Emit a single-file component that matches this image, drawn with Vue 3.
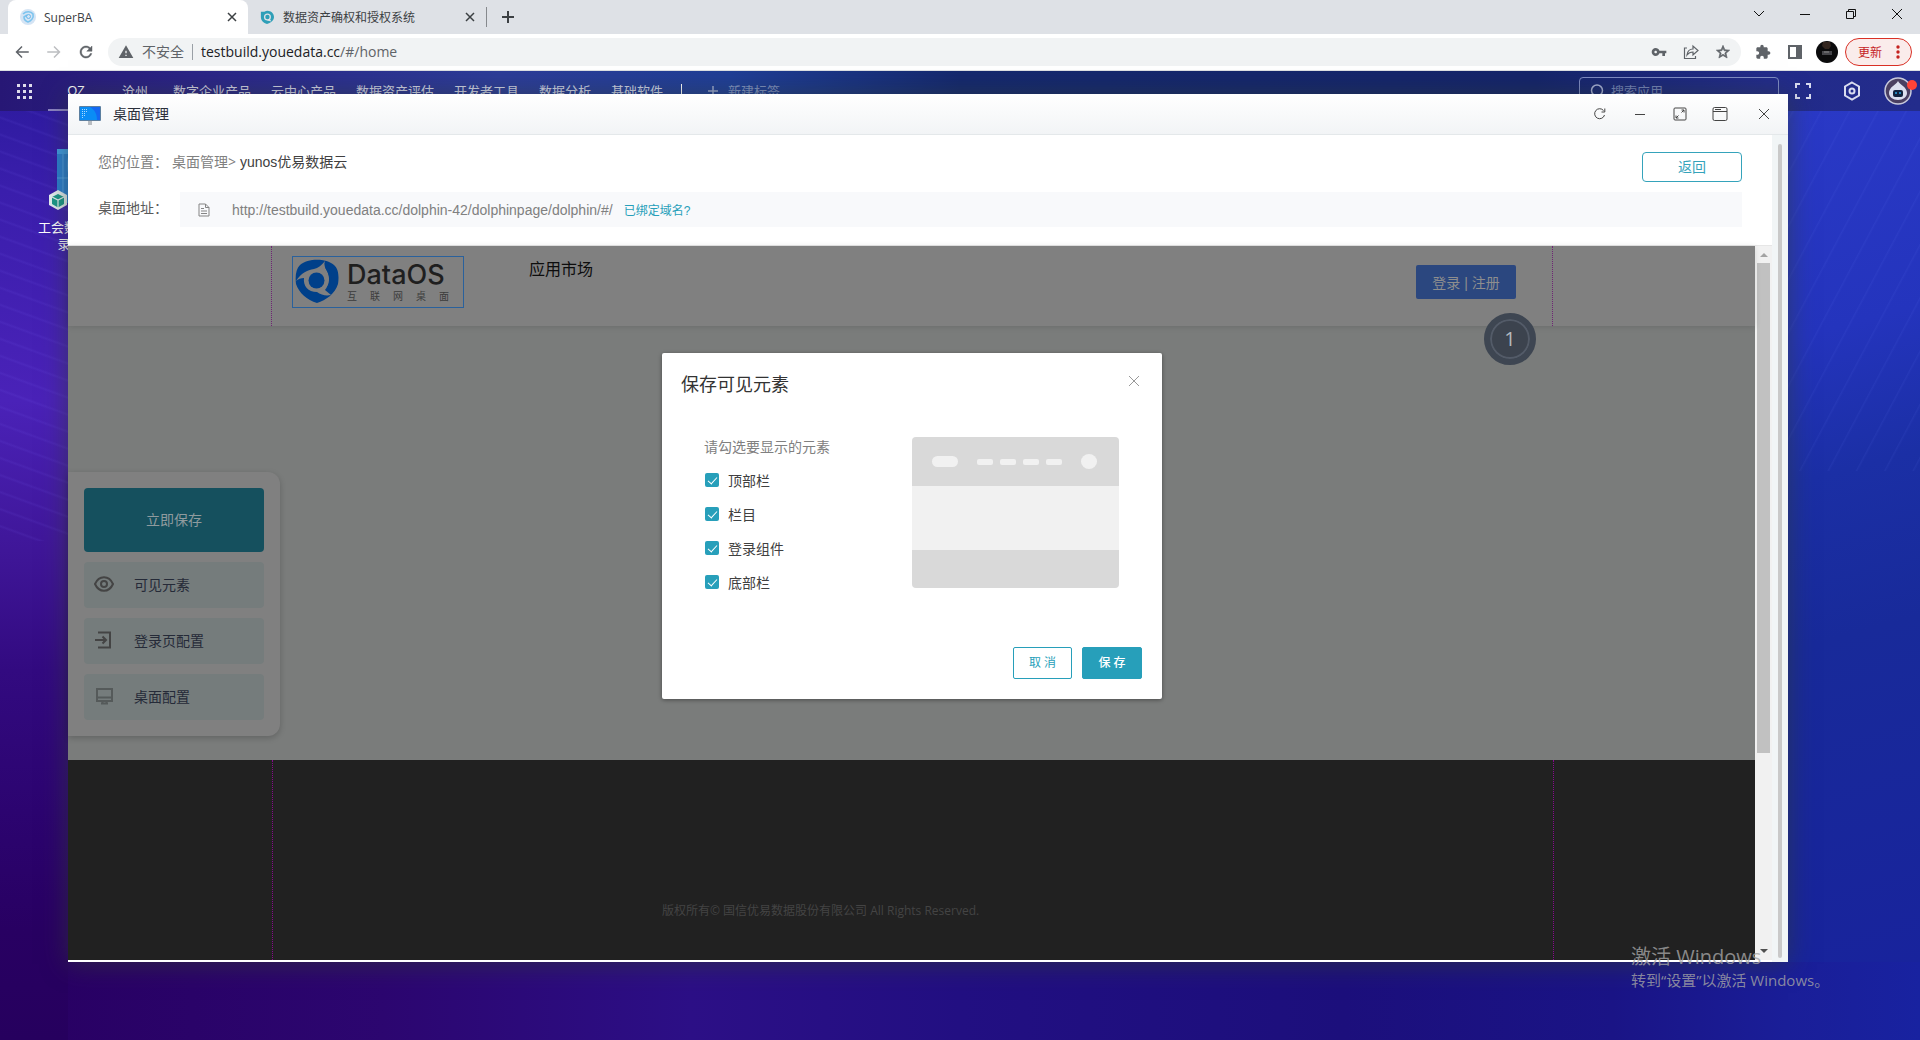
<script setup>
import { ref } from 'vue'

const desktopTabs = ['沧州', '数字企业产品', '云中心产品', '数据资产评估', '开发者工具', '数据分析', '基础软件']
const address = ref('testbuild.youedata.cc/#/home')
const elements = ref([
  { id: 'top', label: '顶部栏', on: true },
  { id: 'column', label: '栏目', on: true },
  { id: 'login', label: '登录组件', on: true },
  { id: 'bottom', label: '底部栏', on: true },
])
</script>

<template>
  <div class="screen">
    <header class="browser">
      <div class="tabstrip">
        <div class="tab active">
          <svg class="fav" viewBox="0 0 16 16"><circle cx="8" cy="8" r="8" fill="#d5e4f4" /><path d="M3 5c3-3 8-3 10 0 1 4-2 7-5 8-3-1-4-3-4-5l3-2" fill="none" stroke="#7cc4ee" stroke-width="1.6" /><circle cx="8.500" cy="7.500" r="2" fill="none" stroke="#6ab8ea" /></svg>
          <span class="tab-title">SuperBA</span>
          <button class="tab-close" aria-label="关闭"><svg viewBox="0 0 10 10"><path d="M1 1l8 8M9 1l-8 8" /></svg></button>
        </div>
        <div class="tab">
          <svg class="fav small" viewBox="0 0 16 16"><path d="M1 2l4 0c5-3 11 1 11 6 0 4-4 7-8 8-4-1-7-4-7-8z" fill="#2f9fb8" /><circle cx="8.500" cy="8" r="4" fill="#dee1e6" /><circle cx="8.500" cy="8" r="2.500" fill="#2f9fb8" /><path d="M8 12l5 1-2-3z" fill="#dee1e6" /></svg>
          <span class="tab-title">数据资产确权和授权系统</span>
          <button class="tab-close" aria-label="关闭"><svg viewBox="0 0 10 10"><path d="M1 1l8 8M9 1l-8 8" /></svg></button>
        </div>
        <button class="new-tab" aria-label="新标签页"><svg viewBox="0 0 12 12"><path d="M6 0v12M0 6h12" /></svg></button>
        <div class="win-ctl">
          <svg viewBox="0 0 12 12"><path d="M1 3l5 5 5-5" /></svg>
          <svg viewBox="0 0 12 12"><path d="M1 6.500h10" /></svg>
          <svg viewBox="0 0 12 12"><path d="M1.500 3.500h7v7h-7zM3.500 3V1.500h7v7H9" /></svg>
          <svg viewBox="0 0 12 12"><path d="M1 1l10 10M11 1L1 11" /></svg>
        </div>
      </div>
      <div class="toolbar">
        <div class="nav-ctl">
          <svg viewBox="0 0 24 24" fill="#5f6368"><path d="M21 11H7.100l5.590-5.590L11.300 4l-8 8 8 8 1.410-1.410L7.100 13H21v-2z" /></svg>
          <svg viewBox="0 0 24 24" fill="#bcbec1"><path d="M3 11h13.900l-5.590-5.590L12.700 4l8 8-8 8-1.410-1.410L16.900 13H3v-2z" /></svg>
          <svg viewBox="0 0 24 24" fill="#5f6368"><path d="M17.650 6.350C16.200 4.900 14.210 4 12 4c-4.420 0-7.990 3.580-7.990 8s3.570 8 7.990 8c3.730 0 6.840-2.550 7.730-6h-2.080c-.82 2.330-3.040 4-5.650 4-3.310 0-6-2.690-6-6s2.690-6 6-6c1.660 0 3.140.69 4.220 1.780L13 11h7V4l-2.350 2.350z" stroke="#5f6368" stroke-width=".6" /></svg>
        </div>
        <div class="omnibox">
          <svg viewBox="0 0 24 24" fill="#5f6368"><path d="M1 21h22L12 2 1 21zm12-3h-2v-2h2v2zm0-4h-2v-4h2v4z" /></svg>
          <span class="unsafe">不安全</span>
          <span class="url" :title="address"><b>testbuild.youedata.cc</b>/#/home</span>
          <svg viewBox="0 0 24 24" fill="#5f6368"><path d="M12.650 10C11.830 7.670 9.610 6 7 6c-3.310 0-6 2.690-6 6s2.690 6 6 6c2.610 0 4.830-1.670 5.650-4H17v4h4v-4h2v-4H12.650zM7 14c-1.100 0-2-.9-2-2s.9-2 2-2 2 .9 2 2-.9 2-2 2z" /></svg>
          <svg viewBox="0 0 16 16" fill="none" stroke="#5f6368" stroke-width="1.200"><path d="M4 4H1.500v10.500h11V12M4 11c.5-4 3-6 6-6V2l5 4.500-5 4.500V8C7.500 8 5.500 9 4 11z" /></svg>
          <svg viewBox="0 0 24 24" fill="#5f6368"><path d="M22 9.240l-7.190-.62L12 2 9.190 8.630 2 9.240l5.460 4.730L5.820 21 12 17.270 18.180 21l-1.630-7.030L22 9.240zM12 15.400l-3.760 2.270 1-4.280-3.320-2.880 4.380-.38L12 6.100l1.710 4.040 4.380.38-3.320 2.880 1 4.280L12 15.400z" stroke="#5f6368" /></svg>
        </div>
        <div class="ext">
          <svg viewBox="0 0 24 24" fill="#5f6368"><path d="M20.500 11H19V7c0-1.100-.9-2-2-2h-4V3.500C13 2.120 11.880 1 10.500 1S8 2.120 8 3.500V5H4c-1.100 0-1.990.9-1.990 2v3.800H3.500c1.490 0 2.700 1.210 2.700 2.700s-1.210 2.700-2.700 2.700H2V20c0 1.100.9 2 2 2h3.800v-1.500c0-1.490 1.210-2.700 2.700-2.700 1.490 0 2.700 1.210 2.700 2.700V22H17c1.100 0 2-.9 2-2v-4h1.500c1.380 0 2.500-1.120 2.500-2.500S21.880 11 20.500 11z" /></svg>
          <svg viewBox="0 0 16 16" fill="#5f6368"><path d="M1 1h14v14H1zM3 3v10h6V3z" fill-rule="evenodd" /></svg>
          <svg class="user" viewBox="0 0 22 22"><circle cx="11" cy="11" r="11" fill="#0b0b0c" /><path d="M7 1h7l1 4-2 3H9L6 5z" fill="#33261f" /><path d="M6 10h10v4H6z" fill="#46464a" /><path d="M8 11h5" stroke="#8a8a8a" /></svg>
        </div>
        <button class="update">更新<svg viewBox="0 0 4 16"><circle cx="2" cy="3" r="1.700" /><circle cx="2" cy="8" r="1.700" /><circle cx="2" cy="13" r="1.700" /></svg></button>
      </div>
    </header>

    <main class="desktop">
      <nav class="dock">
        <svg class="apps" viewBox="0 0 15 15"><path d="M0 0h3v3H0zM6 0h3v3H6zM12 0h3v3h-3zM0 6h3v3H0zM6 6h3v3H6zM12 6h3v3h-3zM0 12h3v3H0zM6 12h3v3H6zM12 12h3v3h-3z" fill="#fff" fill-opacity=".85" /></svg>
        <a class="home" href="#/home">OZ</a>
        <a v-for="t in desktopTabs" :key="t" class="dock-link" href="#/home">{{ t }}</a>
        <span class="bar"></span>
        <button class="add-tab"><svg viewBox="0 0 10 10"><path d="M5 0v10M0 5h10" /></svg>新建标签</button>
        <label class="search">
          <svg viewBox="0 0 14 14"><circle cx="7" cy="6.500" r="5.500" /><path d="M10 11l2 2" /></svg>
          <input type="text" placeholder="搜索应用" aria-label="搜索应用" />
        </label>
        <svg class="full" viewBox="0 0 16 16"><path d="M1 5V1h4M11 1h4v4M15 11v4h-4M5 15H1v-4" /></svg>
        <svg class="hex" viewBox="0 0 18 20"><path d="M9 1.500l7 4v9l-7 4-7-4v-9z" /><circle cx="9" cy="10" r="2.500" /></svg>
        <div class="me">
          <svg viewBox="0 0 28 28"><circle cx="14" cy="14" r="13" fill="#4a3f62" stroke="#c7c9dc" stroke-width="1.500" /><path d="M14 4c2 4 9 6 9 12 0 4-4 7-9 7s-9-3-9-7c0-6 7-8 9-12z" fill="#dcdff0" /><rect x="9" y="13" width="10" height="7" rx="2" fill="#12233f" /><path d="M12 15v2M16 15v2" stroke="#2ba4e0" stroke-width="1.500" /></svg>
          <i></i>
        </div>
      </nav>

      <div class="shortcut">
        <svg viewBox="0 0 44 62"><rect x="8" y="1" width="36" height="54" fill="#2a7fd2" /><path d="M8 1h36v5H8z" fill="#3f9be4" /><path d="M14 6v49M8 30h36M20 6c-4 20 2 30 14 46" stroke="#69b4ee" stroke-opacity=".6" fill="none" /><path d="M9 42l9 5v10l-9 5-9-5V47z" fill="#e6f0f2" /><path d="M9 46l6 3v7l-6 3.500-6-3.500v-7z" fill="#1b9a8a" /><path d="M3 49l6 3 6-3M9 52v8" stroke="#e6f0f2" stroke-width="1.200" fill="none" /></svg>
        <span>工会数据录</span>
      </div>

      <section class="window">
        <header class="titlebar">
          <svg class="app-icon" viewBox="0 0 22 19"><path d="M9 15h4v4H9z" fill="#b9bdc2" /><rect width="22" height="15" rx="1" fill="#5c7fa0" /><rect x="1" y="1" width="20" height="13" fill="#0a8cf5" /><path d="M11 1h10v13h-3c0-6-2-10-7-13z" fill="#1467f2" /><path d="M3 3h1v1H3zM5 3h1v1H5zM7 3h1v1H7zM3 5h1v1H3zM5 5h1v1H5zM7 5h1v1H7zM3 7h1v1H3zM5 7h1v1H5zM3 9h1v1H3zM5 9h1v1H5zM3 11h1v1H3z" fill="#a9dcff" /></svg>
          <h1>桌面管理</h1>
          <div class="title-ctl">
            <svg viewBox="0 0 16 16"><path d="M12.500 9A5 5 0 1 1 11.500 4.500M12.800 2.500v3.500H9.500" /></svg>
            <svg viewBox="0 0 16 16"><path d="M3 8.500h10" /></svg>
            <svg viewBox="0 0 16 16"><rect x="2" y="2" width="12" height="12" rx="1" /><path d="M9.500 6.500L12 4M9.500 4H12v2.500M6.500 9.500L4 12M4 9.500V12h2.500" /></svg>
            <svg viewBox="0 0 16 16"><rect x="1" y="1.500" width="14" height="13" rx="1.500" /><path d="M1 5.500h14M3 3.500h6" /></svg>
            <svg viewBox="0 0 16 16"><path d="M3 3l10 10M13 3L3 13" /></svg>
          </div>
        </header>
        <div class="body">
          <div class="content">
            <div class="info">
              <div class="row">
                <p class="crumb"><span>您的位置：</span><a href="#/desktop">桌面管理&gt;</a><strong>yunos优易数据云</strong></p>
                <button class="back">返回</button>
              </div>
              <div class="row addr">
                <span class="addr-label">桌面地址：</span>
                <div class="addr-box">
                  <svg viewBox="0 0 12 14"><path d="M1 1h6.500L11 4.500V13H1zM7.500 1v3.500H11M3 5.500h3M3 8h6M3 10.500h6" /></svg>
                  <span>http://testbuild.youedata.cc/dolphin-42/dolphinpage/dolphin/#/</span>
                  <a href="#/domain">已绑定域名?</a>
                </div>
              </div>
            </div>

            <div class="frame">
              <div class="site">
                <div class="site-head">
                  <div class="guide">
                    <div class="logo">
                      <svg viewBox="0 0 44 44"><path d="M5 6C13-1 31-1 39 6c5 4 5 13 4 19-3 10-12 16-21 19C12 41 4 34 1 25 0 17 1 10 5 6z" fill="#00408a" /><path d="M1 22c5-8 11-11 18-12 4-1 8-4 11-8-1 4 0 7 2 10 4 7 3 14-2 19l6 5c-5 1-10 0-14-3-9 0-14-6-13-14-3 0-6 1-8 3z" fill="#808080" /><path d="M30 2c-1 4 0 7 2 10 3 6 3 13-2 19 8-6 9-19 0-29z" fill="#00408a" /><circle cx="21.500" cy="21.500" r="8" fill="#00408a" /></svg>
                      <div class="logo-words">
                        <b>DataOS</b>
                        <small><span>互</span><span>联</span><span>网</span><span>桌</span><span>面</span></small>
                      </div>
                    </div>
                    <a class="market" href="#/market">应用市场</a>
                    <button class="login">登录 | 注册</button>
                    <span class="badge">1</span>
                  </div>
                </div>
                <div class="site-main">
                  <aside class="panel">
                    <button class="save-now">立即保存</button>
                    <button class="item"><svg viewBox="0 0 20 20"><path d="M1 10c4-9 14-9 18 0-4 9-14 9-18 0z" /><circle cx="10" cy="10" r="3" /></svg>可见元素</button>
                    <button class="item"><svg viewBox="0 0 20 20"><path d="M4 2.500h12v15H4M1 10h11M8.500 6.500L12 10l-3.500 3.500" /></svg>登录页配置</button>
                    <button class="item dim"><svg viewBox="0 0 20 20"><path d="M3 3h15v12H3zM3 11.500h15M8.500 15v2.500M12.500 15v2.500M7 17.500h7" /></svg>桌面配置</button>
                  </aside>
                </div>
                <footer class="site-foot">
                  <div class="guide">
                    <p>版权所有© 国信优易数据股份有限公司 All Rights Reserved.</p>
                  </div>
                </footer>
              </div>
              <div class="scroll">
                <i class="up"></i>
                <span></span>
                <i class="down"></i>
              </div>

              <form class="dialog" role="dialog" @submit.prevent>
                <header>
                  <h2>保存可见元素</h2>
                  <button type="button" class="x" aria-label="关闭"><svg viewBox="0 0 12 12"><path d="M1 1l10 10M11 1L1 11" /></svg></button>
                </header>
                <div class="dialog-body">
                  <fieldset>
                    <legend>请勾选要显示的元素</legend>
                    <label v-for="e in elements" :key="e.id" :for="e.id"><input :id="e.id" v-model="e.on" type="checkbox" />{{ e.label }}</label>
                  </fieldset>
                  <div class="preview">
                    <div class="p-top"><i class="pill"></i><div class="dashes"><i></i><i></i><i></i><i></i></div><i class="dot"></i></div>
                    <div class="p-mid"></div>
                    <div class="p-bot"></div>
                  </div>
                </div>
                <div class="actions">
                  <button type="button">取 消</button>
                  <button type="submit" class="primary">保 存</button>
                </div>
              </form>
            </div>
          </div>
          <div class="gutter"><span></span></div>
        </div>
      </section>

      <div class="activate">
        <p class="big">激活 Windows</p>
        <p>转到“设置”以激活 Windows。</p>
      </div>
    </main>
  </div>
</template>

<style>
body {
  margin: 0;
}
</style>

<style scoped>
* {
  box-sizing: border-box;
}
.screen {
  display: flex;
  flex-direction: column;
  min-height: 100vh;
  overflow: hidden;
  font-family: "Open Sans", "Noto Sans CJK SC", sans-serif;
  font-size: 14px;
  font-weight: 400;
  color: #333;
}
svg {
  display: block;
  flex: none;
}
button {
  padding: 0;
  border: 0;
  background: none;
  font: inherit;
  color: inherit;
}
p,
h1,
h2 {
  margin: 0;
  font-weight: 400;
}
a {
  color: inherit;
  text-decoration: none;
}

/* browser chrome */
.browser {
  border-bottom: 1px solid #dcdfe2;
  background: #fff;
}
.tabstrip {
  display: flex;
  align-items: flex-end;
  height: 34px;
  padding-left: 8px;
  background: #dee1e6;
  font-size: 12px;
  color: #3c4043;
}
.tab {
  display: flex;
  align-items: center;
  width: 238px;
  height: 34px;
  padding: 0 11px 0 12px;
}
.tab.active {
  width: 240px;
  border-radius: 8px 8px 0 0;
  background: #fff;
}
.fav {
  width: 16px;
  height: 16px;
  margin-right: 8px;
}
.fav.small {
  width: 14px;
  height: 14px;
  margin-right: 9px;
}
.tab-title {
  flex: 1;
}
.tab-close svg {
  width: 10px;
  height: 10px;
  stroke: #3c4043;
  stroke-width: 1.5;
}
.new-tab {
  align-self: center;
  height: 20px;
  padding-left: 15px;
  border-left: 1px solid #86898d;
}
.new-tab svg {
  width: 12px;
  height: 12px;
  stroke: #3c4043;
  stroke-width: 2;
}
.win-ctl {
  display: flex;
  gap: 34px;
  margin-left: auto;
  padding: 0 17px 14px 0;
}
.win-ctl svg {
  width: 12px;
  height: 12px;
  fill: none;
  stroke: #111;
}
.toolbar {
  display: flex;
  align-items: center;
  height: 36px;
  padding: 0 8px 0 13px;
}
.nav-ctl {
  display: flex;
  gap: 14px;
  margin-right: 13px;
}
.nav-ctl svg {
  width: 18px;
  height: 18px;
}
.omnibox {
  display: flex;
  flex: 1;
  align-items: center;
  gap: 16px;
  height: 28px;
  padding: 0 10px;
  border-radius: 14px;
  background: #f1f3f4;
  line-height: 18px;
  color: #5f6368;
}
.omnibox svg {
  width: 16px;
  height: 16px;
}
.unsafe {
  margin-left: -8px;
  padding-right: 8px;
  border-right: 1px solid #9aa0a6;
  line-height: 16px;
}
.url {
  flex: 1;
  margin-left: -8px;
}
.url b {
  font-weight: 400;
  color: #202124;
}
.ext {
  display: flex;
  align-items: center;
  gap: 16px;
  margin: 0 7px 0 14px;
}
.ext svg {
  width: 16px;
  height: 16px;
}
.ext .user {
  width: 22px;
  height: 22px;
  margin-left: -3px;
}
.update {
  display: flex;
  align-items: center;
  gap: 14px;
  height: 28px;
  padding: 0 11px 0 12px;
  border: 1px solid #d93025;
  border-radius: 14px;
  background: #faeceb;
  font-size: 12px;
  color: #c5221f;
}
.update svg {
  width: 4px;
  height: 16px;
  fill: #c5221f;
}

/* desktop */
.desktop {
  position: relative;
  flex: 1;
  background:
    repeating-linear-gradient(20deg, transparent 0 12px, rgba(130, 110, 255, 0.09) 14px, transparent 16px) 0 0 / 68px 470px no-repeat,
    repeating-linear-gradient(118deg, transparent 0 22px, rgba(110, 130, 255, 0.08) 23px, transparent 25px) 100% 0 / 132px 400px no-repeat,
    linear-gradient(180deg, #2a1a9c 0, #3a1eac 120px, #4a22b8 330px, #3f1698 480px, #320a80 600px, #2c0470 740px, #280062 860px, #26005e 100%) 0 0 / 68px 100% no-repeat,
    linear-gradient(165deg, #2b3ac8 0, #2434bd 260px, #1b2fa5 400px, #182a9a 560px, #18239c 100%) 100% 0 / 132px 891px no-repeat,
    linear-gradient(90deg, #280062 0, #2c0670 20%, #2c0f86 36%, #220f82 50%, #1c0f7c 70%, #1a1486 84%, #1a1e98 93%, #1822a0 100%);
}
.dock {
  display: flex;
  align-items: center;
  height: 40px;
  padding: 0 8px 0 17px;
  background: linear-gradient(90deg, #271775 0, #2a2486 10%, #2c3c98 26%, #1f3e96 38%, #14286e 50%, #14246a 80%, #222b8a 92%, #232c8c 100%);
  font-size: 13px;
  line-height: 16px;
  color: rgba(255, 255, 255, 0.8);
}
.apps {
  width: 15px;
  height: 15px;
  margin-right: 16px;
}
.home {
  align-self: stretch;
  width: 56px;
  margin-right: 18px;
  border-bottom: 2px solid #8d84c4;
  line-height: 38px;
  text-align: center;
  color: #fff;
}
.dock-link {
  margin-right: 20px;
}
.dock-link:first-of-type,
.home + .dock-link {
  margin-right: 25px;
}
.home {
  margin-right: 18px !important;
}
.bar {
  width: 1px;
  height: 14px;
  margin: 0 26px 0 -2px;
  background: #fff;
}
.add-tab {
  display: flex;
  align-items: center;
  gap: 10px;
  opacity: 0.55;
}
.add-tab svg {
  width: 10px;
  height: 10px;
  stroke: #fff;
  stroke-width: 1.5;
}
.search {
  display: flex;
  align-items: center;
  gap: 7px;
  width: 200px;
  height: 28px;
  margin-left: auto;
  padding: 0 10px;
  border: 1px solid #7f8cc4;
  border-radius: 4px;
}
.search svg {
  width: 14px;
  height: 14px;
  fill: none;
  stroke: #a9b1d8;
  stroke-width: 1.5;
}
.search input {
  flex: 1;
  min-width: 0;
  height: 18px;
  padding: 0;
  border: 0;
  background: none;
  font: inherit;
}
.search input::placeholder {
  color: #7482b8;
}
.full {
  width: 16px;
  height: 16px;
  margin: 0 32px 0 16px;
  fill: none;
  stroke: #d9dcf0;
  stroke-width: 2;
}
.hex {
  width: 18px;
  height: 20px;
  margin-right: 23px;
  fill: none;
  stroke: #d9dcf0;
  stroke-width: 2;
}
.me {
  position: relative;
}
.me svg {
  width: 28px;
  height: 28px;
}
.me i {
  position: absolute;
  top: 3px;
  right: -5px;
  width: 10px;
  height: 10px;
  border-radius: 50%;
  background: #ff4338;
}
.shortcut {
  position: absolute;
  top: 77px;
  left: 34px;
  display: flex;
  flex-direction: column;
  align-items: center;
  gap: 9px;
  width: 60px;
  font-size: 13px;
  line-height: 17px;
  text-align: center;
  color: #fff;
}
.shortcut svg {
  width: 44px;
  height: 62px;
  margin-left: 14px;
}
.shortcut span {
  width: 54px;
}

/* app window */
.window {
  position: absolute;
  top: 23px;
  right: 132px;
  bottom: 78px;
  left: 68px;
  display: flex;
  flex-direction: column;
  background: #fff;
  box-shadow: 0 2px 24px rgba(50, 60, 50, 0.6);
}
.titlebar {
  display: flex;
  align-items: center;
  height: 41px;
  padding: 0 16px 0 11px;
  border-bottom: 1px solid #e4e8ea;
  background: linear-gradient(#fff, #f2f4f6);
}
.app-icon {
  width: 22px;
  height: 19px;
  margin: 2px 12px 0 0;
}
.titlebar h1 {
  font-size: 14px;
  line-height: 20px;
  color: #2b2f3a;
}
.title-ctl {
  display: flex;
  gap: 24px;
  margin-left: auto;
}
.title-ctl svg {
  width: 16px;
  height: 16px;
  fill: none;
  stroke: #444;
}
.title-ctl svg:last-child {
  margin-left: 4px;
}
.body {
  display: flex;
  flex: 1;
}
.content {
  display: flex;
  flex: 1;
  flex-direction: column;
  min-width: 0;
  padding-bottom: 2px;
}
.gutter {
  display: flex;
  justify-content: center;
  width: 16px;
  padding: 9px 0 4px;
  background: #f1f5f6;
}
.gutter span {
  width: 4px;
  border-radius: 2px;
  background: #c9c9c9;
}
.info {
  height: 111px;
  padding: 17px 30px 0;
  border-bottom: 1px solid #e6e6e6;
}
.row {
  display: flex;
  justify-content: space-between;
}
.crumb {
  display: flex;
  line-height: 20px;
  color: #808080;
}
.crumb span {
  width: 74px;
}
.crumb strong {
  margin-left: 4px;
  font-family: "Liberation Sans", "Noto Sans CJK SC", sans-serif;
  font-weight: 400;
  color: #404040;
}
.back {
  width: 100px;
  height: 30px;
  border: 1px solid #35a3bb;
  border-radius: 4px;
  line-height: 26px;
  color: #35a3bb;
}
.addr {
  margin-top: 10px;
  color: #595959;
}
.addr-label {
  width: 82px;
  line-height: 31px;
}
.addr-box {
  display: flex;
  flex: 1;
  align-items: center;
  height: 35px;
  padding: 0 18px;
  background: #f8f9fb;
  font-family: "Liberation Sans", "Noto Sans CJK SC", sans-serif;
  color: #808080;
}
.addr-box svg {
  width: 12px;
  height: 14px;
  margin-right: 22px;
  fill: none;
  stroke: #858585;
}
.addr-box a {
  margin-left: 11px;
  font-size: 12px;
  color: #279fba;
}

/* embedded site, dimmed by the dialog mask */
.frame {
  position: relative;
  display: flex;
  flex: 1;
}
.site {
  display: flex;
  flex: 1;
  flex-direction: column;
  min-width: 0;
  background: #7a7c7b;
}
.site-head {
  z-index: 1;
  height: 80px;
  background: #808080;
  box-shadow: 0 1px 6px rgba(0, 0, 0, 0.12);
}
.guide {
  position: relative;
  display: flex;
  width: calc(100% - 405px);
  height: 100%;
  margin: 0 0 0 203px;
  border: 1px dotted #6f2475;
  border-width: 0 1px;
}
.logo {
  display: flex;
  gap: 8px;
  width: 172px;
  height: 52px;
  margin: 10px 0 0 20px;
  padding: 2px;
  border: 1px solid #2a619c;
}
.logo > svg {
  width: 44px;
  height: 44px;
}
.logo-words {
  display: flex;
  flex-direction: column;
  width: 102px;
}
.logo-words b {
  font-family: Inter, sans-serif;
  font-size: 27px;
  font-weight: 500;
  line-height: 32px;
  color: #1f1f1f;
}
.logo-words small {
  display: flex;
  justify-content: space-between;
  font-size: 10px;
  line-height: 10px;
  color: #3c3c3c;
}
.market {
  margin: 11px 0 0 65px;
  font-size: 16px;
  line-height: 24px;
  color: #0d0d0d;
}
.login {
  width: 100px;
  height: 34px;
  margin: 19px 36px 0 auto;
  border-radius: 2px;
  background: #2b477f;
  font-family: "Liberation Sans", "Noto Sans CJK SC", sans-serif;
  color: #8e8e8e;
}
.badge {
  position: absolute;
  top: 67px;
  right: 16px;
  width: 52px;
  height: 52px;
  border: 6px solid #3e4652;
  border-radius: 50%;
  background: #3c434e;
  box-shadow: inset 0 0 0 2px #535b68;
  font-size: 20px;
  line-height: 40px;
  text-align: center;
  color: #b4b9bd;
}
.site-main {
  display: flex;
  flex: 1;
  align-items: flex-start;
}
.panel {
  display: flex;
  flex-direction: column;
  gap: 10px;
  width: 212px;
  margin-top: 146px;
  padding: 16px;
  border-radius: 0 12px 12px 0;
  background: #808080;
  box-shadow: 0 2px 6px rgba(0, 0, 0, 0.2);
}
.save-now {
  height: 64px;
  padding-bottom: 2px;
  border-radius: 4px;
  background: #15505e;
  color: #8f9b9e;
}
.item {
  display: flex;
  align-items: center;
  gap: 20px;
  height: 46px;
  padding: 0 10px 2px;
  border-radius: 4px;
  background: #757c7c;
  color: #252a38;
}
.item svg {
  width: 20px;
  height: 20px;
  fill: none;
  stroke: #444;
  stroke-width: 2;
}
.item.dim svg {
  stroke: #555a5a;
}
.site-foot {
  height: 200px;
  background: #212121;
}
.site-foot .guide {
  margin-left: 204px;
  border-color: #870a8c;
}
.site-foot p {
  margin: 142px 0 0 389px;
  font-size: 12px;
  line-height: 18px;
  color: #444;
}
.scroll {
  display: flex;
  flex-direction: column;
  width: 17px;
  padding: 7px 2px 7px;
  background: #f1f1f1;
}
.scroll span {
  width: 13px;
  height: 70%;
  margin: 6px 0 auto;
  background: #c1c1c1;
}
.scroll i {
  width: 0;
  height: 0;
  margin-left: 3px;
  border: 4px solid transparent;
  border-width: 0 4px 4px;
}
.scroll .up {
  border-bottom-color: #a3a3a3;
}
.scroll .down {
  border-width: 4px 4px 0;
  border-top-color: #505050;
}

/* dialog */
.dialog {
  position: absolute;
  z-index: 2;
  top: 107px;
  left: calc(50% - 258px);
  width: 500px;
  height: 346px;
  border-radius: 2px;
  background: #fff;
  box-shadow: 0 1px 4px rgba(0, 0, 0, 0.4);
}
.dialog header {
  display: flex;
  justify-content: space-between;
  padding: 18px 22px 0 19px;
}
.dialog h2 {
  font-size: 18px;
  line-height: 26px;
}
.x {
  height: 20px;
}
.x svg {
  width: 12px;
  height: 12px;
  stroke: #999;
}
.dialog-body {
  display: flex;
  justify-content: space-between;
  padding: 40px 43px 0 42px;
}
.dialog fieldset {
  min-width: 0;
  margin: 0;
  padding: 0;
  border: 0;
}
.dialog legend {
  margin-bottom: 6px;
  padding: 0;
  line-height: 20px;
  color: #808080;
}
.dialog fieldset label {
  display: flex;
  align-items: center;
  gap: 9px;
  height: 34px;
  color: #404040;
}
.dialog input {
  appearance: none;
  width: 14px;
  height: 14px;
  margin: 0 0 0 1px;
  border-radius: 2px;
  background: #279fba;
}
.dialog input:checked::after {
  content: "";
  display: block;
  width: 4px;
  height: 8px;
  margin: 2px 0 0 5px;
  border: solid #fff;
  border-width: 0 1px 1px 0;
  transform: rotate(42deg);
}
.preview {
  width: 207px;
  height: 151px;
  border-radius: 4px;
  overflow: hidden;
}
.p-top {
  display: flex;
  align-items: center;
  justify-content: space-between;
  height: 49px;
  padding: 0 22px 0 20px;
  background: #d9d9d9;
}
.p-top i {
  background: #f1f1f1;
}
.pill {
  width: 26px;
  height: 11px;
  border-radius: 6px;
}
.dashes {
  display: flex;
  gap: 7px;
}
.dashes i {
  width: 16px;
  height: 6px;
  border-radius: 2px;
}
.dot {
  width: 16px;
  height: 15px;
  border-radius: 50%;
}
.p-mid {
  height: 64px;
  background: #f1f1f1;
}
.p-bot {
  height: 38px;
  background: #d9d9d9;
}
.actions {
  display: flex;
  justify-content: flex-end;
  gap: 10px;
  padding: 48px 20px 0 0;
}
.actions button {
  width: 59px;
  height: 32px;
  border: 1px solid #279fba;
  border-radius: 2px;
  font-size: 12px;
  line-height: 28px;
  color: #279fba;
}
.actions .primary {
  width: 60px;
  background: #279fba;
  font-weight: 500;
  color: #fff;
}

.activate {
  position: absolute;
  right: 89px;
  bottom: 50px;
  width: 200px;
  font-size: 15px;
  line-height: 20px;
  white-space: nowrap;
  color: rgba(165, 165, 165, 0.8);
}
.activate .big {
  font-size: 20px;
  line-height: 26px;
}
</style>
